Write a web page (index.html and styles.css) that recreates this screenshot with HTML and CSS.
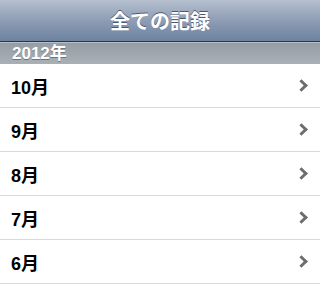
FILE: index.html
```html
<!DOCTYPE html>
<html lang="ja">
<head>
  <meta charset="UTF-8" />
  <meta name="viewport" content="width=device-width, initial-scale=1" />
  <title>全ての記録</title>
  <link rel="stylesheet" href="styles.css">
</head>
<body>
  <div class="navbar">
    <h1 class="title">全ての記録</h1>
  </div>
  <div class="section-header">2012年</div>
  <ul class="list">
    <li class="row"><span class="label">10月</span><span class="chevron"></span></li>
    <li class="row"><span class="label">9月</span><span class="chevron"></span></li>
    <li class="row"><span class="label">8月</span><span class="chevron"></span></li>
    <li class="row"><span class="label">7月</span><span class="chevron"></span></li>
    <li class="row"><span class="label">6月</span><span class="chevron"></span></li>
  </ul>
</body>
</html>
```

FILE: styles.css
```css
body {
  margin: 0;
  font-family: "Liberation Sans", Arial, "Noto Sans CJK JP", sans-serif;
  background-color: #fff;
  width: 320px;
  height: 284px;
  overflow: hidden;
}
.navbar {
  height: 41px;
  border-bottom: 1px solid #2d3642;
  background: linear-gradient(#b5c0cf, #8e9db4 50%, #6c82a0);
  display: flex;
  align-items: center;
  justify-content: center;
}
.title {
  margin: 0;
  color: #fff;
  font-size: 20px;
  font-weight: bold;
  text-shadow: 0 -1px 0 #4a5870;
}
.section-header {
  height: 21px;
  border-top: 1px solid #b8bfc4;
  background: linear-gradient(#959ea4, #a9b1b7);
  color: #fff;
  font-size: 17px;
  font-weight: bold;
  line-height: 21px;
  padding-left: 12px;
  text-shadow: 0 1px 0 #6c757c;
}
.list {
  list-style: none;
  margin: 0;
  padding: 0;
}
.row {
  height: 43px;
  border-bottom: 1px solid #d9d9d9;
  display: flex;
  align-items: center;
  justify-content: space-between;
  padding: 0 14px 0 11px;
}
.label {
  font-size: 18px;
  font-weight: bold;
  color: #000;
}
.chevron {
  width: 6px;
  height: 6px;
  border-top: 3px solid #6e6e6e;
  border-right: 3px solid #6e6e6e;
  transform: rotate(45deg);
}
```
